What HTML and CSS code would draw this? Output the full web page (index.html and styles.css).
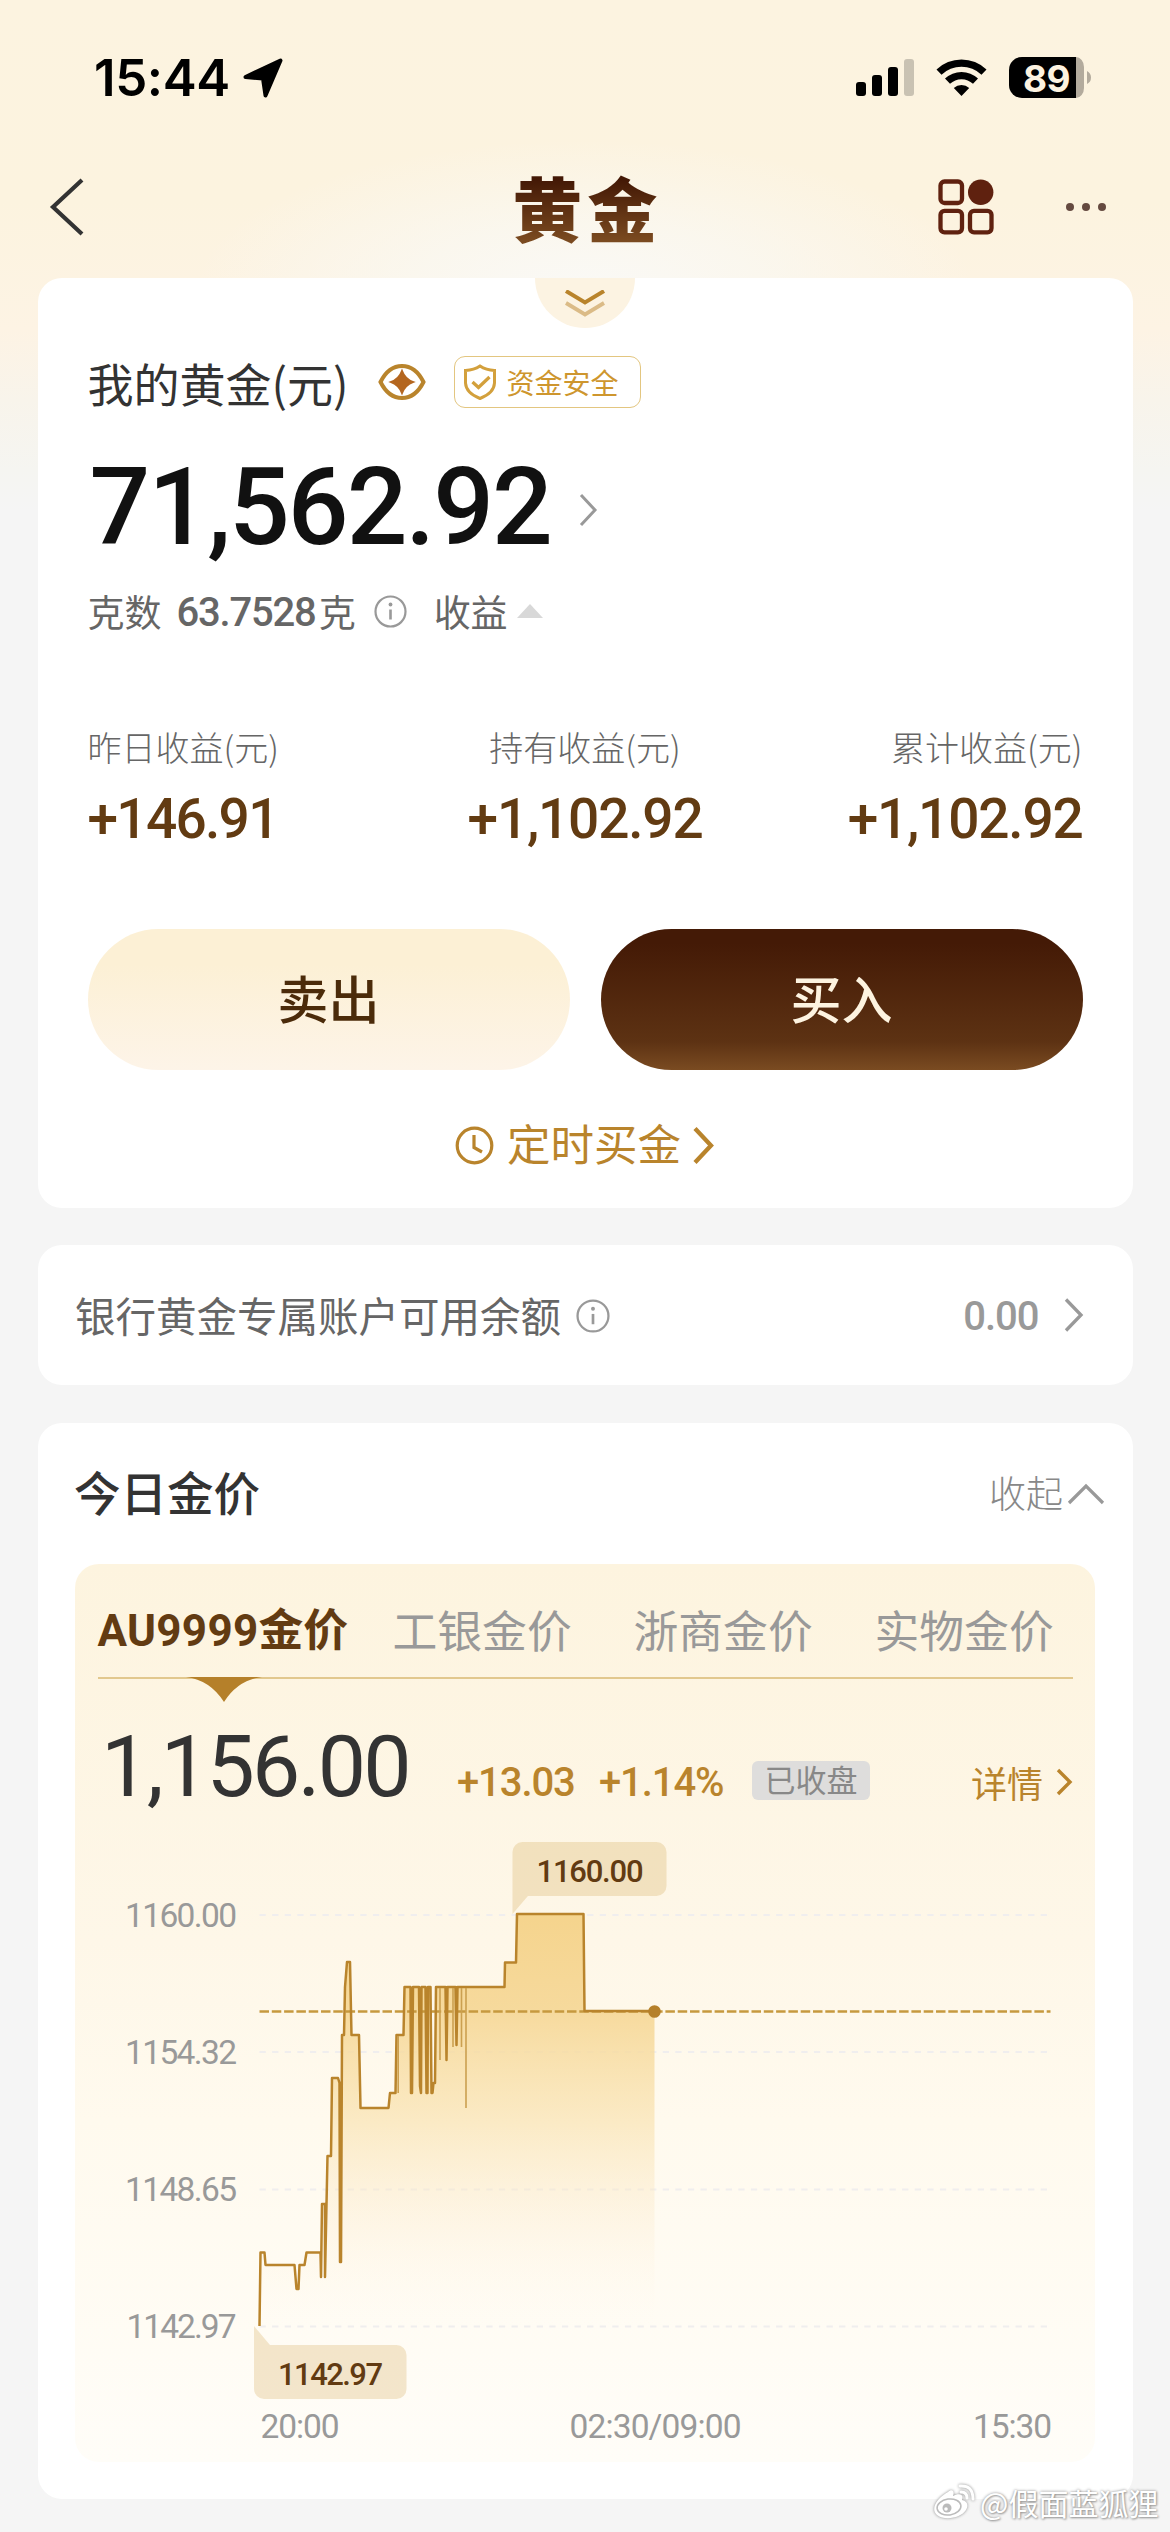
FILE: index.html
```html
<!DOCTYPE html>
<html lang="zh-CN">
<head>
<meta charset="utf-8">
<title>黄金</title>
<link rel="stylesheet" href="styles.css">
</head>
<body>
<div class="screen">
  <header class="status">
    <span class="clock">15:44</span>
    <svg class="locate" width="42" height="42" viewBox="0 0 42 42"><path d="M38.500 3.500 23.500 38.500 21 21.500 3.500 20z" fill="#000" stroke="#000" stroke-width="4" stroke-linejoin="round"/></svg>
    <svg class="signals" width="240" height="42" viewBox="855 57 240 42">
      <rect x="856" y="82" width="10" height="14" rx="3"/><rect x="872" y="75" width="10" height="21" rx="3"/><rect x="888" y="67" width="10" height="29" rx="3"/><rect x="904" y="59" width="10" height="37" rx="3" opacity=".2"/>
      <path d="M936.500 69.500a36 36 0 0 1 50 0l-5 5.300a29 29 0 0 0-40 0zM945 78.500a24 24 0 0 1 33 0l-5 5.300a16.500 16.500 0 0 0-23 0zM953.800 88a11.500 11.500 0 0 1 15.400 0L961.500 96z"/>
      <path d="M1022 57h54v41h-54a13 13 0 0 1-13-13V70a13 13 0 0 1 13-13z"/><path class="dim" d="M1076 57a8 10 0 0 1 8 10v21a8 10 0 0 1-8 10zM1087 71q4 2 4 6.500t-4 6.500z"/>
      <text class="charge" x="1046.500" y="91.500" text-anchor="middle">89</text>
    </svg>
  </header>
  <nav class="nav">
    <svg width="38" height="60" viewBox="0 0 38 60"><path class="ln dark" d="M34 3 5 30 34 57" stroke-width="4.200"/></svg>
    <h1>黄金</h1>
    <svg width="170" height="60" viewBox="936 177 170 60">
      <g class="ln brown" stroke-width="4.300"><rect x="940.500" y="181.500" width="21.500" height="21.500" rx="4"/><rect x="940.500" y="210.800" width="21.500" height="21.500" rx="4"/><rect x="970" y="210.800" width="21.500" height="21.500" rx="4"/></g>
      <circle cx="980.700" cy="192.300" r="12.700" fill="#5f210f"/>
      <g fill="#654a40"><circle cx="1070" cy="207" r="4"/><circle cx="1086" cy="207" r="4"/><circle cx="1102" cy="207" r="4"/></g>
    </svg>
  </nav>

  <section class="card holdings">
    <div class="pull"><svg width="42" height="28" viewBox="0 0 42 28"><path class="ln gold" d="M2 1 21 12.500 40 1" stroke-width="4"/><path class="ln gold" d="M2 13 21 24.500 40 13" stroke-width="3.800" opacity=".5"/></svg></div>
    <div class="row title-row">
      <h2>我的黄金(元)</h2>
      <svg class="eye" width="48" height="38" viewBox="0 0 48 38"><path class="ln gold" d="M2.500 19C8 8 15 3 24 3s16 5 21.500 16C40 30 33 35 24 35S8 30 2.500 19z" stroke-width="4"/><path d="M24 7.500Q27 16 35.500 19 27 22 24 30.500 21 22 12.500 19 21 16 24 7.500z" fill="#b4661f" stroke="#b4661f" stroke-width="1.500"/></svg>
      <span class="safe"><svg width="34" height="37" viewBox="0 0 34 37"><path class="ln amber" d="M17 2Q23 6 31.500 6.500V19Q31 29 17 34.500 3 29 2.500 19V6.500Q11 6 17 2z" stroke-width="3"/><path class="ln amber" d="M9.500 18 15.500 23.500 26.500 13" stroke-width="3.300"/></svg>资金安全</span>
    </div>
    <div class="row amount"><span class="num">71,562.92</span><svg width="19" height="34" viewBox="0 0 19 34"><path class="ln gray" d="M2 2 16 17 2 32" stroke-width="3"/></svg></div>
    <div class="row grams"><span>克数</span><b class="num">63.7528</b><span>克</span>
      <svg class="info" width="33" height="33" viewBox="0 0 33 33"><circle class="ln gray" cx="16.500" cy="16.500" r="15" stroke-width="2.200"/><path class="ln gray" d="M16.500 14.500v10" stroke-width="2.600"/><circle cx="16.500" cy="9.500" r="1.900" fill="#999"/></svg>
      <span class="gain">收益</span><svg class="tri" width="26" height="14" viewBox="0 0 26 14"><path d="M13 0 26 14H0z" fill="#d8d8d8"/></svg></div>
    <div class="stats">
      <div><p>昨日收益(元)</p><b class="num short">+146.91</b></div>
      <div><p>持有收益(元)</p><b class="num">+1,102.92</b></div>
      <div><p>累计收益(元)</p><b class="num">+1,102.92</b></div>
    </div>
    <div class="actions"><button class="sell">卖出</button><button class="buy">买入</button></div>
    <div class="row plan"><svg width="39" height="39" viewBox="0 0 39 39"><circle class="ln gold" cx="19.500" cy="19.500" r="17.300" stroke-width="3.200"/><path class="ln gold" d="M19 9v12.500l8 4.500" stroke-width="3.200"/></svg><span>定时买金</span><svg width="22" height="37" viewBox="0 0 22 37"><path class="ln gold" d="M2 1.500 18 18.500 2 35.500" stroke-width="4.300"/></svg></div>
  </section>

  <section class="card balance">
    <span class="name">银行黄金专属账户可用余额</span>
    <svg class="info" width="34" height="34" viewBox="0 0 33 33"><circle class="ln gray" cx="16.500" cy="16.500" r="15" stroke-width="2.200"/><path class="ln gray" d="M16.500 14.500v10" stroke-width="2.600"/><circle cx="16.500" cy="9.500" r="1.900" fill="#999"/></svg>
    <b class="num">0.00</b>
    <svg width="20" height="34" viewBox="0 0 20 34"><path class="ln gray" d="M2 1.500 17 17 2 32.500" stroke-width="3.300"/></svg>
  </section>

  <section class="card market">
    <div class="market-head"><h3>今日金价</h3><span>收起</span><svg width="38" height="22" viewBox="0 0 38 22"><path class="ln gray" d="M2 20 19 3 36 20" stroke-width="3.200"/></svg></div>
    <div class="panel">
      <div class="tabs"><b><span class="num">AU9999</span>金价</b><span>工银金价</span><span>浙商金价</span><span>实物金价</span>
        <svg class="pointer" width="76" height="26" viewBox="0 0 76 26"><path d="M0 0H76Q52 3 38 25 24 3 0 0z" fill="#b5802a"/></svg></div>
      <div class="quote"><span class="num price">1,156.00</span><b class="num delta">+13.03</b><b class="num pct">+1.14%</b><span class="closed">已收盘</span><span class="more">详情</span><svg width="17" height="28" viewBox="0 0 17 28"><path class="ln gold" d="M2 2 14 14 2 26" stroke-width="3.400"/></svg></div>
      <svg class="chart" width="1019" height="632" viewBox="75.500 1830 1019 632">
        <defs><linearGradient id="area" gradientUnits="userSpaceOnUse" x1="0" y1="1914" x2="0" y2="2326"><stop offset="0" stop-color="#f5d48d"/><stop offset=".23" stop-color="#f6d898" stop-opacity=".95"/><stop offset=".5" stop-color="#f8dfa8" stop-opacity=".6"/><stop offset=".75" stop-color="#fbe9ca" stop-opacity=".3"/><stop offset="1" stop-color="#fff9ee" stop-opacity="0"/></linearGradient></defs>
        <path class="grid" d="M260 1915H1050M260 2052H1050M260 2189.500H1050M260 2326.500H1050"/>
        <path fill="url(#area)" d="M260 2326L261 2252.500H265L266 2265H295L297 2289H299L300 2265H305L307 2252.500H321L322.500 2204H327L328 2156H331.500L332.500 2078H338.500L341.500 2083 342.500 2035H344.500L345.500 1987 347.500 1962H350.500L352 2035H359.500L361 2108H389L390.500 2093H396L397 2035H404L405 1987H411V2093H412.500L413.500 1987H419.500L421 2093 422 1987H426L427 2093 428.500 1987H431L432 2093 435.500 2083 436.500 1987H505L505.500 1962.500H516.500L517.500 1914H584L585 2011H655V2326z"/>
        <path class="base" d="M260 2011.500H1051"/>
        <path class="line" d="M260 2326L261 2252.500H265L266 2265H295L297 2289H299L300 2265H305L307 2252.500H321L321.500 2277 322.500 2204H325.500V2277L327 2204 328 2156H331.500L332.500 2078H338.500L340 2083 340.500 2262H341.500L342.500 2035H344.500L345.500 1987 347.500 1962H350.500L352 2035H359.500L361 2108H389L390.500 2093H396L397 2035H404L405 1987H411L411.500 2093H412.500L413.500 1987H419.500L420.500 2086 421.500 2093 422 1987H426L427 2093H428L428.500 1987H431L432 2093H433L434 2083H435.500L436.500 1987H440H446L447 2060 448 1987H453H456L457 2045 458 1987H461.500H505L505.500 1962.500H516.500L517.500 1914H584L585 2011H655"/>
        <path class="faint" d="M398.700 2036V2093M440.500 1988V2060M453.500 1988V2047M462 1988V2047M466.500 1988V2108"/>
        <circle cx="655" cy="2011.500" r="6.300" fill="#b5802a"/>
        <g fill="#c89532" fill-opacity=".22"><path d="M523 1842H657a10 10 0 0 1 10 10V1886a10 10 0 0 1-10 10H513V1852a10 10 0 0 1 10-10zM513 1893H531L513 1914z"/><path d="M254.500 2345H397a10 10 0 0 1 10 10V2389a10 10 0 0 1-10 10H264.500a10 10 0 0 1-10-10zM254.500 2326L273 2348H254.500z"/></g>
        <g class="tip"><text x="537" y="1882" textLength="107">1160.00</text><text x="278.500" y="2385" textLength="105">1142.97</text></g>
        <g class="axis"><text x="125.500" y="1927" textLength="112">1160.00</text><text x="125.500" y="2064" textLength="112">1154.32</text><text x="125.500" y="2201" textLength="112">1148.65</text><text x="127" y="2338" textLength="110">1142.97</text>
        <text x="261" y="2438" textLength="79">20:00</text><text x="570" y="2438" textLength="172">02:30/09:00</text><text x="973.500" y="2438" textLength="79">15:30</text></g>
      </svg>
    </div>
  </section>
  <div class="watermark"><svg width="44" height="36" viewBox="0 0 44 36"><path d="M16 8C20 4 23 7 21 12 27 9 32 10 30 16 35 17 37 21 34 26 29 34 13 37 5 31-2 25 5 14 16 8z" fill="#fff"/><ellipse cx="17" cy="23" rx="12" ry="8" fill="none" stroke="#bbb" stroke-width="1.500" transform="rotate(-8 17 23)"/><circle cx="15" cy="24" r="4.500" fill="#bbb"/><circle cx="14" cy="25" r="1.800" fill="#fff"/><path d="M28 2Q41 1 41 15M29 8Q35 8 35 14" fill="none" stroke="#fff" stroke-width="3" stroke-linecap="round"/></svg><span>@假面蓝狐狸</span></div>
</div>
</body>
</html>
```

FILE: styles.css
```css
* { box-sizing: border-box; margin: 0; padding: 0; }
body { background: #f5f5f5; font-family: "Noto Sans CJK SC", sans-serif; color: #333; }
svg { display: block; flex: none; }
.screen {
  position: relative; width: 1170px; height: 2532px; overflow: hidden; padding: 0 37.5px;
  background:
    radial-gradient(ellipse 390px 150px at 585px 290px, #faf9f6 0, #faf8f1cc 45%, #fbf5e900 100%),
    linear-gradient(#fcf3e0 0, #fcf3df 200px, #fdf3e4 330px, #f8f4eb 400px, #f5f5f1 470px, #f5f5f5 510px);
}
.num { font-family: Roboto, sans-serif; font-weight: 500; }
.ln { fill: none; stroke-linejoin: miter; }
.dark { stroke: #333; } .brown { stroke: #5f210f; } .gold { stroke: #b9842c; } .amber { stroke: #d3a03c; } .gray { stroke: #999; }
.status { height: 156px; padding: 57px 37.5px 0 56.500px; display: flex; align-items: flex-start; }
.clock { font: 600 51px/42px Inter, sans-serif; letter-spacing: -.4px; color: #000; }
.locate { margin-left: 12px; }
.signals { margin-left: auto; }
.dim { fill: #b3ab9d; }
.charge { font: 700 37px Inter, sans-serif; fill: #fdf3e0; letter-spacing: -.5px; }
.nav { height: 122px; display: grid; grid-template-columns: 1fr auto 1fr; align-items: center; padding: 0 26.500px 20px 10px; }
.nav > :last-child { justify-self: end; }
.nav h1 { font-size: 70px; font-weight: 900; line-height: 80px; letter-spacing: 5px; padding-left: 21px; color: transparent; background: linear-gradient(#431805 15%, #7a4a20 92%); background-clip: text; -webkit-background-clip: text; }
.card { background: #fff; border-radius: 24px; }
.row { display: flex; align-items: center; }
.holdings { position: relative; height: 930px; padding: 78px 50px 0; }
.pull { position: absolute; left: 497.500px; top: 0; width: 100px; height: 50px; border-radius: 0 0 50px 50px; background: #fcf3e2; display: flex; justify-content: center; padding-top: 12px; }
.title-row { height: 52px; }
.title-row h2 { font-size: 46px; font-weight: 400; line-height: 52px; width: 290px; white-space: nowrap; }
.safe { margin-left: 28px; width: 187px; height: 52px; border: 1.500px solid #e3c680; border-radius: 11px; display: flex; align-items: center; gap: 10px; padding-left: 8px; font-size: 28px; line-height: 48px; color: #ce962e; white-space: nowrap; }
.amount { height: 106px; margin-top: 47px; gap: 28px; color: #111; }
.amount .num { font-size: 107px; line-height: 106px; letter-spacing: -2px; padding-left: 2px; }
.amount svg { margin-top: 3px; }
.grams { height: 40px; margin-top: 30px; font-size: 37px; line-height: 40px; color: #666; }
.grams .num { font-size: 40px; letter-spacing: -1.200px; margin: 3px 3px 0 15px; }
.grams .info { margin-left: 18px; }
.gain { margin-left: 27px; }
.tri { margin-left: 9px; }
.stats { margin-top: 97px; display: grid; grid-template-columns: 1fr auto 1fr; }
.stats > :last-child { text-align: right; }
.stats > :nth-child(2) { text-align: center; }
.stats p { height: 40px; font-size: 34px; line-height: 37px; font-weight: 300; color: #666; }
.stats b { display: block; margin-top: 21px; height: 60px; font-size: 55px; line-height: 60px; letter-spacing: -1.200px; color: #623b12; }
.stats .short { letter-spacing: -1.700px; }
.actions { margin-top: 80px; display: grid; grid-template-columns: 1fr 1fr; gap: 31px; }
.actions button { height: 141px; border: 0; border-radius: 71px; padding-bottom: 6px; font: 500 51px/130px "Noto Sans CJK SC", sans-serif; }
.sell { color: #4b2b0a; background: linear-gradient(#fcf0d5 25%, #fdf4e8); }
.buy { color: #fdf3e0; background: linear-gradient(#441a06 10%, #5d3213 80%, #7a4b21); }
.plan { height: 50px; margin-top: 50px; justify-content: center; font-size: 43.500px; line-height: 46px; color: #b9842c; }
.plan span { margin: -4px 12px 0 13px; }
.balance { height: 140px; margin-top: 37px; padding: 0 49px 0 37.500px; display: flex; align-items: center; }
.balance .name { font-size: 40.500px; line-height: 50px; color: #666; }
.balance .info { margin-left: 15px; margin-top: 2px; }
.balance b { margin-left: auto; margin-right: 25px; margin-top: 3px; font-size: 40px; letter-spacing: -1px; color: #999; }
.market { height: 1076px; margin-top: 38px; padding: 0 37.500px; }
.market-head { height: 141px; display: flex; align-items: center; margin-right: -10px; }
.market-head h3 { font-size: 46.500px; line-height: 60px; font-weight: 500; margin: -5px auto 0 -1px; }
.market-head span { font-size: 37px; line-height: 44px; font-weight: 300; color: #888; margin: -4px 4px 0 0; }
.panel { height: 898px; border-radius: 24px; background: linear-gradient(#fdf4df, #fef7e8 42%, #fffaee 62%, #fffdf8); }
.tabs { position: relative; height: 115px; margin: 0 22.500px; padding-top: 16px; border-bottom: 2px solid #e2c88e; display: flex; align-items: center; font-size: 44.800px; line-height: 60px; color: #999; }
.tabs > * { white-space: nowrap; flex: none; }
.tabs b { width: 295px; color: #623b12; font-weight: 700; }
.tabs b .num { font-size: 44px; font-weight: 700; letter-spacing: .3px; }
.tabs > span { width: 241px; }
.pointer { position: absolute; left: 88px; top: 113px; }
.quote { height: 151px; padding: 43px 22px 0 26px; display: flex; align-items: baseline; color: #b9842c; }
.price { font-size: 86px; line-height: 90px; font-weight: 400; letter-spacing: -2.700px; color: #333; width: 356px; }
.quote b { font-size: 40px; line-height: 44px; letter-spacing: -1.100px; }
.delta { width: 142px; } .pct { width: 153px; }
.closed { position: relative; top: -4px; width: 118px; height: 39px; border-radius: 6px; background: #dedddc; color: #888; font-size: 31px; line-height: 36px; text-align: center; }
.more { position: relative; top: 2px; margin-left: auto; margin-right: 13px; font-size: 36px; line-height: 44px; }
.chart text { font-family: Roboto, sans-serif; }
.axis { font-size: 33.500px; fill: #999; }
.tip { font-size: 31px; font-weight: 500; fill: #623b12; }
.grid { stroke: #f0eeee; stroke-width: 2; stroke-dasharray: 6.300 6.300; }
.base { stroke: #c6993f; stroke-width: 2.300; stroke-dasharray: 9.500 2.800; }
.line { fill: none; stroke: #b9842c; stroke-width: 2.500; stroke-linejoin: round; }
.faint { stroke: #cba050; stroke-width: 1.600; }
.watermark { position: absolute; left: 932px; top: 2483px; display: flex; align-items: center; gap: 4px; color: #fff; font-size: 30px; line-height: 38px; white-space: nowrap; text-shadow: 0 0 3px #888, 1px 1px 2px #aaa; }
.watermark svg { filter: drop-shadow(0 0 1.500px #888); }
```
